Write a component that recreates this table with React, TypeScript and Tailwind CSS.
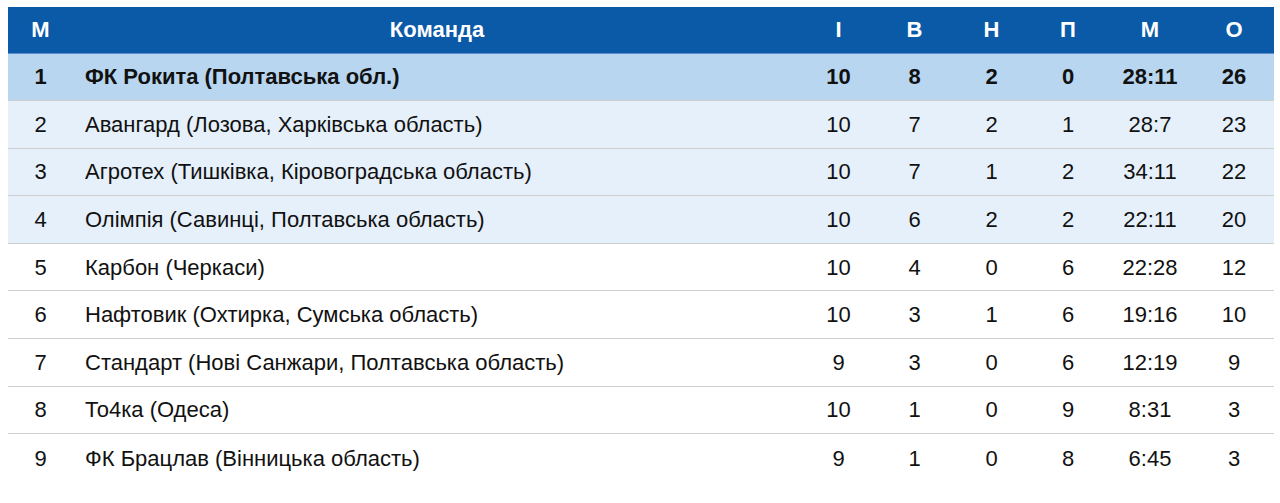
const rows = [
  ["1", "ФК Рокита (Полтавська обл.)", "10", "8", "2", "0", "28:11", "26"],
  ["2", "Авангард (Лозова, Харківська область)", "10", "7", "2", "1", "28:7", "23"],
  ["3", "Агротех (Тишківка, Кіровоградська область)", "10", "7", "1", "2", "34:11", "22"],
  ["4", "Олімпія (Савинці, Полтавська область)", "10", "6", "2", "2", "22:11", "20"],
  ["5", "Карбон (Черкаси)", "10", "4", "0", "6", "22:28", "12"],
  ["6", "Нафтовик (Охтирка, Сумська область)", "10", "3", "1", "6", "19:16", "10"],
  ["7", "Стандарт (Нові Санжари, Полтавська область)", "9", "3", "0", "6", "12:19", "9"],
  ["8", "То4ка (Одеса)", "10", "1", "0", "9", "8:31", "3"],
  ["9", "ФК Брацлав (Вінницька область)", "9", "1", "0", "8", "6:45", "3"],
];

const cols = "grid grid-cols-[65px_728px_75px_77px_77px_76px_88px_80px]";

function rowBg(i: number) {
  if (i === 0) return "bg-[#b8d6ef] font-bold";
  if (i < 4) return "bg-[#e5f0fa]";
  return "bg-white";
}

export default function App() {
  return (
    <div className="bg-white min-h-[503px] pt-[7px] pl-2 font-['Liberation_Sans',Arial,sans-serif] text-[22px] text-[#111]">
      <div className="w-[1266px]">
        <div className={`${cols} h-[46.5px] items-center bg-[#0b5aa8] border-b border-[#5b8ecb] font-bold text-white`}>
          <div className="text-center">М</div>
          <div className="text-center">Команда</div>
          <div className="text-center">І</div>
          <div className="text-center">В</div>
          <div className="text-center">Н</div>
          <div className="text-center">П</div>
          <div className="text-center">М</div>
          <div className="text-center">О</div>
        </div>
        {rows.map((r, i) => (
          <div
            key={r[0]}
            className={`${cols} h-[47.6px] items-center ${rowBg(i)} ${i < rows.length - 1 ? "border-b border-[#d0d0d0]" : ""}`}
          >
            <div className="text-center">{r[0]}</div>
            <div className="pl-3">{r[1]}</div>
            {r.slice(2).map((v, j) => (
              <div key={j} className="text-center">{v}</div>
            ))}
          </div>
        ))}
      </div>
    </div>
  );
}
